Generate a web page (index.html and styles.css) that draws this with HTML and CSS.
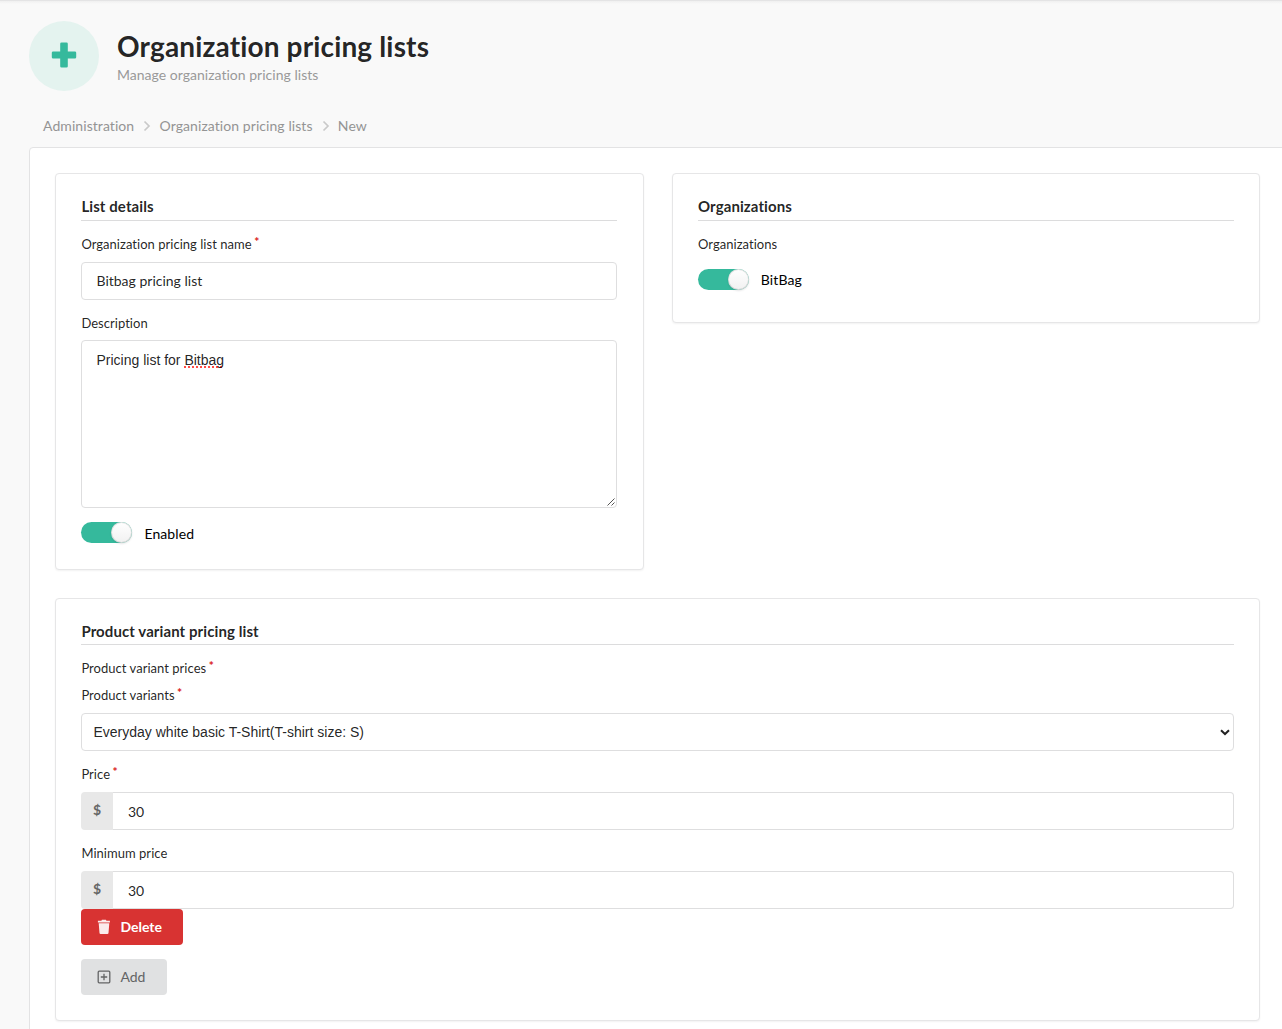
FILE: index.html
```html
<!DOCTYPE html>
<html lang="en">
<head>
<meta charset="utf-8">
<title>Organization pricing lists</title>
<link rel="stylesheet" href="styles.css">
</head>
<body>
<header class="page-header">
  <div class="header-icon">
    <svg width="26" height="26" viewBox="0 0 26 26"><path fill="#35b99c" d="M10.5 0.5h5a1.3 1.3 0 0 1 1.3 1.3V9.400h7.100a1.300 1.300 0 0 1 1.300 1.300v4.600a1.300 1.300 0 0 1-1.300 1.300h-7.100v7.600a1.300 1.300 0 0 1-1.300 1.300h-5a1.300 1.300 0 0 1-1.300-1.300v-7.600H2.100a1.300 1.300 0 0 1-1.300-1.300v-4.600a1.300 1.300 0 0 1 1.300-1.300h7.100V1.800a1.300 1.300 0 0 1 1.300-1.300z"/></svg>
  </div>
  <div class="header-text">
    <h1 class="title">Organization pricing lists</h1>
    <div class="subtitle">Manage organization pricing lists</div>
  </div>
</header>
<nav class="breadcrumb">
  <a>Administration</a>
  <svg class="chevron" width="8" height="12" viewBox="0 0 8 12"><path d="M1.500 1.500L6 6l-4.500 4.500"/></svg>
  <a>Organization pricing lists</a>
  <svg class="chevron" width="8" height="12" viewBox="0 0 8 12"><path d="M1.500 1.500L6 6l-4.500 4.500"/></svg>
  <a>New</a>
</nav>
<main class="panel">
  <div class="columns">
    <section class="card details">
      <h2 class="card-title">List details</h2>
      <label class="label required">Organization pricing list name</label>
      <div class="control">Bitbag pricing list</div>
      <label class="label">Description</label>
      <div class="control area">Pricing list for <span class="misspelt">Bitbag</span>
        <svg class="grip" width="8" height="8" viewBox="0 0 8 8"><path d="M0.500 7.500L7.500 0.500M4.500 7.500L7.500 4.500"/></svg>
      </div>
      <div class="toggle-row"><span class="toggle"></span><span class="toggle-label">Enabled</span></div>
    </section>
    <section class="card organizations">
      <h2 class="card-title">Organizations</h2>
      <label class="label">Organizations</label>
      <div class="toggle-row"><span class="toggle"></span><span class="toggle-label">BitBag</span></div>
    </section>
  </div>
  <section class="card variants">
    <h2 class="card-title">Product variant pricing list</h2>
    <label class="label required">Product variant prices</label>
    <label class="label required">Product variants</label>
    <div class="control select"><span>Everyday white basic T-Shirt(T-shirt size: S)</span>
      <svg width="10" height="7" viewBox="0 0 10 7"><path d="M1 1.200L5 5l4-3.800"/></svg>
    </div>
    <label class="label required">Price</label>
    <div class="money"><span class="currency">$</span><div class="control amount">30</div></div>
    <label class="label">Minimum price</label>
    <div class="money"><span class="currency">$</span><div class="control amount">30</div></div>
    <button class="button delete">
      <svg width="14" height="16" viewBox="0 0 14 16"><path fill="#fff" fill-opacity=".9" d="M.9 1.700h3.500l.5-.9h4l.5.9h3.500v1.700H.9zM1.700 4.200h10.600l-.8 9.800a1.100 1.100 0 0 1-1.100 1H3.600a1.100 1.100 0 0 1-1.100-1z"/></svg>
      <span>Delete</span>
    </button>
    <button class="button add">
      <svg width="14" height="14" viewBox="0 0 14 14" fill="none" stroke="#636465" stroke-width="1.300"><rect x="1.200" y="1.200" width="11.600" height="11.600" rx="1"/><path d="M7 3.800v6.400M3.800 7h6.400"/></svg>
      <span>Add</span>
    </button>
  </section>
</main>
</body>
</html>
```
FILE: styles.css
```css
* { box-sizing: border-box; }
body {
  margin: 0;
  height: 1029px;
  overflow: hidden;
  background: linear-gradient(#e4e4e5 1px, #f0f0f0 1px, #f9f9f9 4px);
  font-family: Lato, "Liberation Sans", sans-serif;
  font-size: 14px;
  font-variant-ligatures: none;
  color: rgba(0, 0, 0, .87);
}
.page-header { display: flex; padding: 21px 0 0 29px; gap: 18px; height: 91px; }
.header-icon {
  width: 70px; height: 70px; border-radius: 50%;
  background: #e4f3ef; display: flex; align-items: center; justify-content: center;
}
.header-icon svg { margin-bottom: 2px; }
.header-text { padding-top: 8px; }
.title { margin: 0; font-size: 28px; line-height: 34px; font-weight: 700; letter-spacing: .15px; white-space: nowrap; }
.subtitle { font-size: 14px; line-height: 20px; margin-top: 2px; letter-spacing: .02px; color: #999; }
.breadcrumb {
  display: flex; align-items: center; height: 20px; letter-spacing: .07px;
  margin: 24px 0 12px 43px; color: #949494; white-space: nowrap;
}
.chevron { margin: 2px 8.300px 0 9px; fill: none; stroke: #c9c9c9; stroke-width: 1.7; }
.panel {
  margin-left: 29px; width: 1280px; height: 920px; padding: 25px;
  background: #fff; border: 1px solid #e3e3e4; border-radius: 4px;
}
.columns {
  display: grid; grid-template-columns: 589px 588px; gap: 28px;
  align-items: start; margin-bottom: 28px;
}
.card {
  background: #fff; border: 1px solid #e6e6e7; border-radius: 4px;
  box-shadow: 0 1px 2px rgba(34, 36, 38, .06); padding: 25px;
}
.details { height: 397px; padding-right: 26px; }
.organizations { height: 150px; }
.variants { width: 1205px; height: 423px; }
.card-title {
  margin: 0 0 14px; height: 22px; font-size: 15px; line-height: 15px; font-weight: 700;
  letter-spacing: .09px; border-bottom: 1px solid #dcdcdd;
}
.details .card-title, .variants .card-title, .details .label, .variants .label { text-indent: .4px; }
.variants .card-title { height: 21px; }
.label { display: block; height: 18px; font-size: 13px; line-height: 19px; letter-spacing: .03px; margin-bottom: 9px; }
.required::after {
  content: "*"; color: #db2828; display: inline-block; text-indent: 0;
  font-size: 12px; font-weight: 900; line-height: 12px; margin-left: 2.500px; vertical-align: 3px;
}
.control {
  height: 38px; padding: 0 15px 0 14.5px; line-height: 36px;
  border: 1px solid #dededf; border-radius: 4px; background: #fff; margin-bottom: 14px;
}
.details .area {
  position: relative; height: 168px; margin-top: -1px; margin-bottom: 14px; padding-top: 10px;
  line-height: 18px; font-family: "Liberation Sans", Arial, sans-serif;
}
.misspelt { text-decoration: underline dotted #ff4b44 2px; text-underline-offset: 1px; text-decoration-skip-ink: none; }
.grip { position: absolute; right: 1px; bottom: 1px; fill: none; stroke: #555; stroke-width: 1; }
.toggle-row { display: flex; height: 21px; gap: 12.400px; }
.toggle {
  width: 51px; height: 21px; border-radius: 11px; background: #35b99c;
  display: flex; justify-content: flex-end;
}
.toggle::after {
  content: ""; width: 21px; height: 21px; border-radius: 50%;
  background: linear-gradient(#fff, #f1f1f1);
  box-shadow: 0 1px 2px rgba(34, 36, 38, .12), inset 0 0 0 1px rgba(34, 36, 38, .13);
}
.toggle-label { line-height: 24px; letter-spacing: .1px; color: #000; }
.organizations .toggle-row { gap: 11.800px; }
.organizations .label { margin-bottom: 16px; }
.organizations .toggle-label { line-height: 22px; }
.select {
  display: flex; align-items: center; justify-content: space-between; padding: 0 3px 0 11.500px;
  font-family: "Liberation Sans", Arial, sans-serif;
}
.select svg { fill: none; stroke: #222; stroke-width: 2; }
.money { display: flex; height: 38px; margin-bottom: 14px; }
.currency {
  width: 32px; padding-left: 12px; line-height: 36px; font-weight: 700; color: #666;
  background: #e8e8e8; border-radius: 4px 0 0 4px;
}
.amount { flex: 1; padding-left: 15px; border-left: 0; border-radius: 0 4px 4px 0; line-height: 38px; }
.money:has(+ .button) { margin-bottom: 0; }
.button {
  display: flex; align-items: center; height: 36px; padding: 0 0 0 16px; gap: 9.400px;
  border: 0; border-radius: 4px; font: 700 14px Lato, sans-serif; font-variant-ligatures: none;
}
.button span { padding-bottom: 2px; }
.delete { width: 102px; background: #d83332; color: #fff; margin-bottom: 14px; }
.add { width: 86px; background: #e0e1e2; color: #636465; font-weight: 400; }
```
